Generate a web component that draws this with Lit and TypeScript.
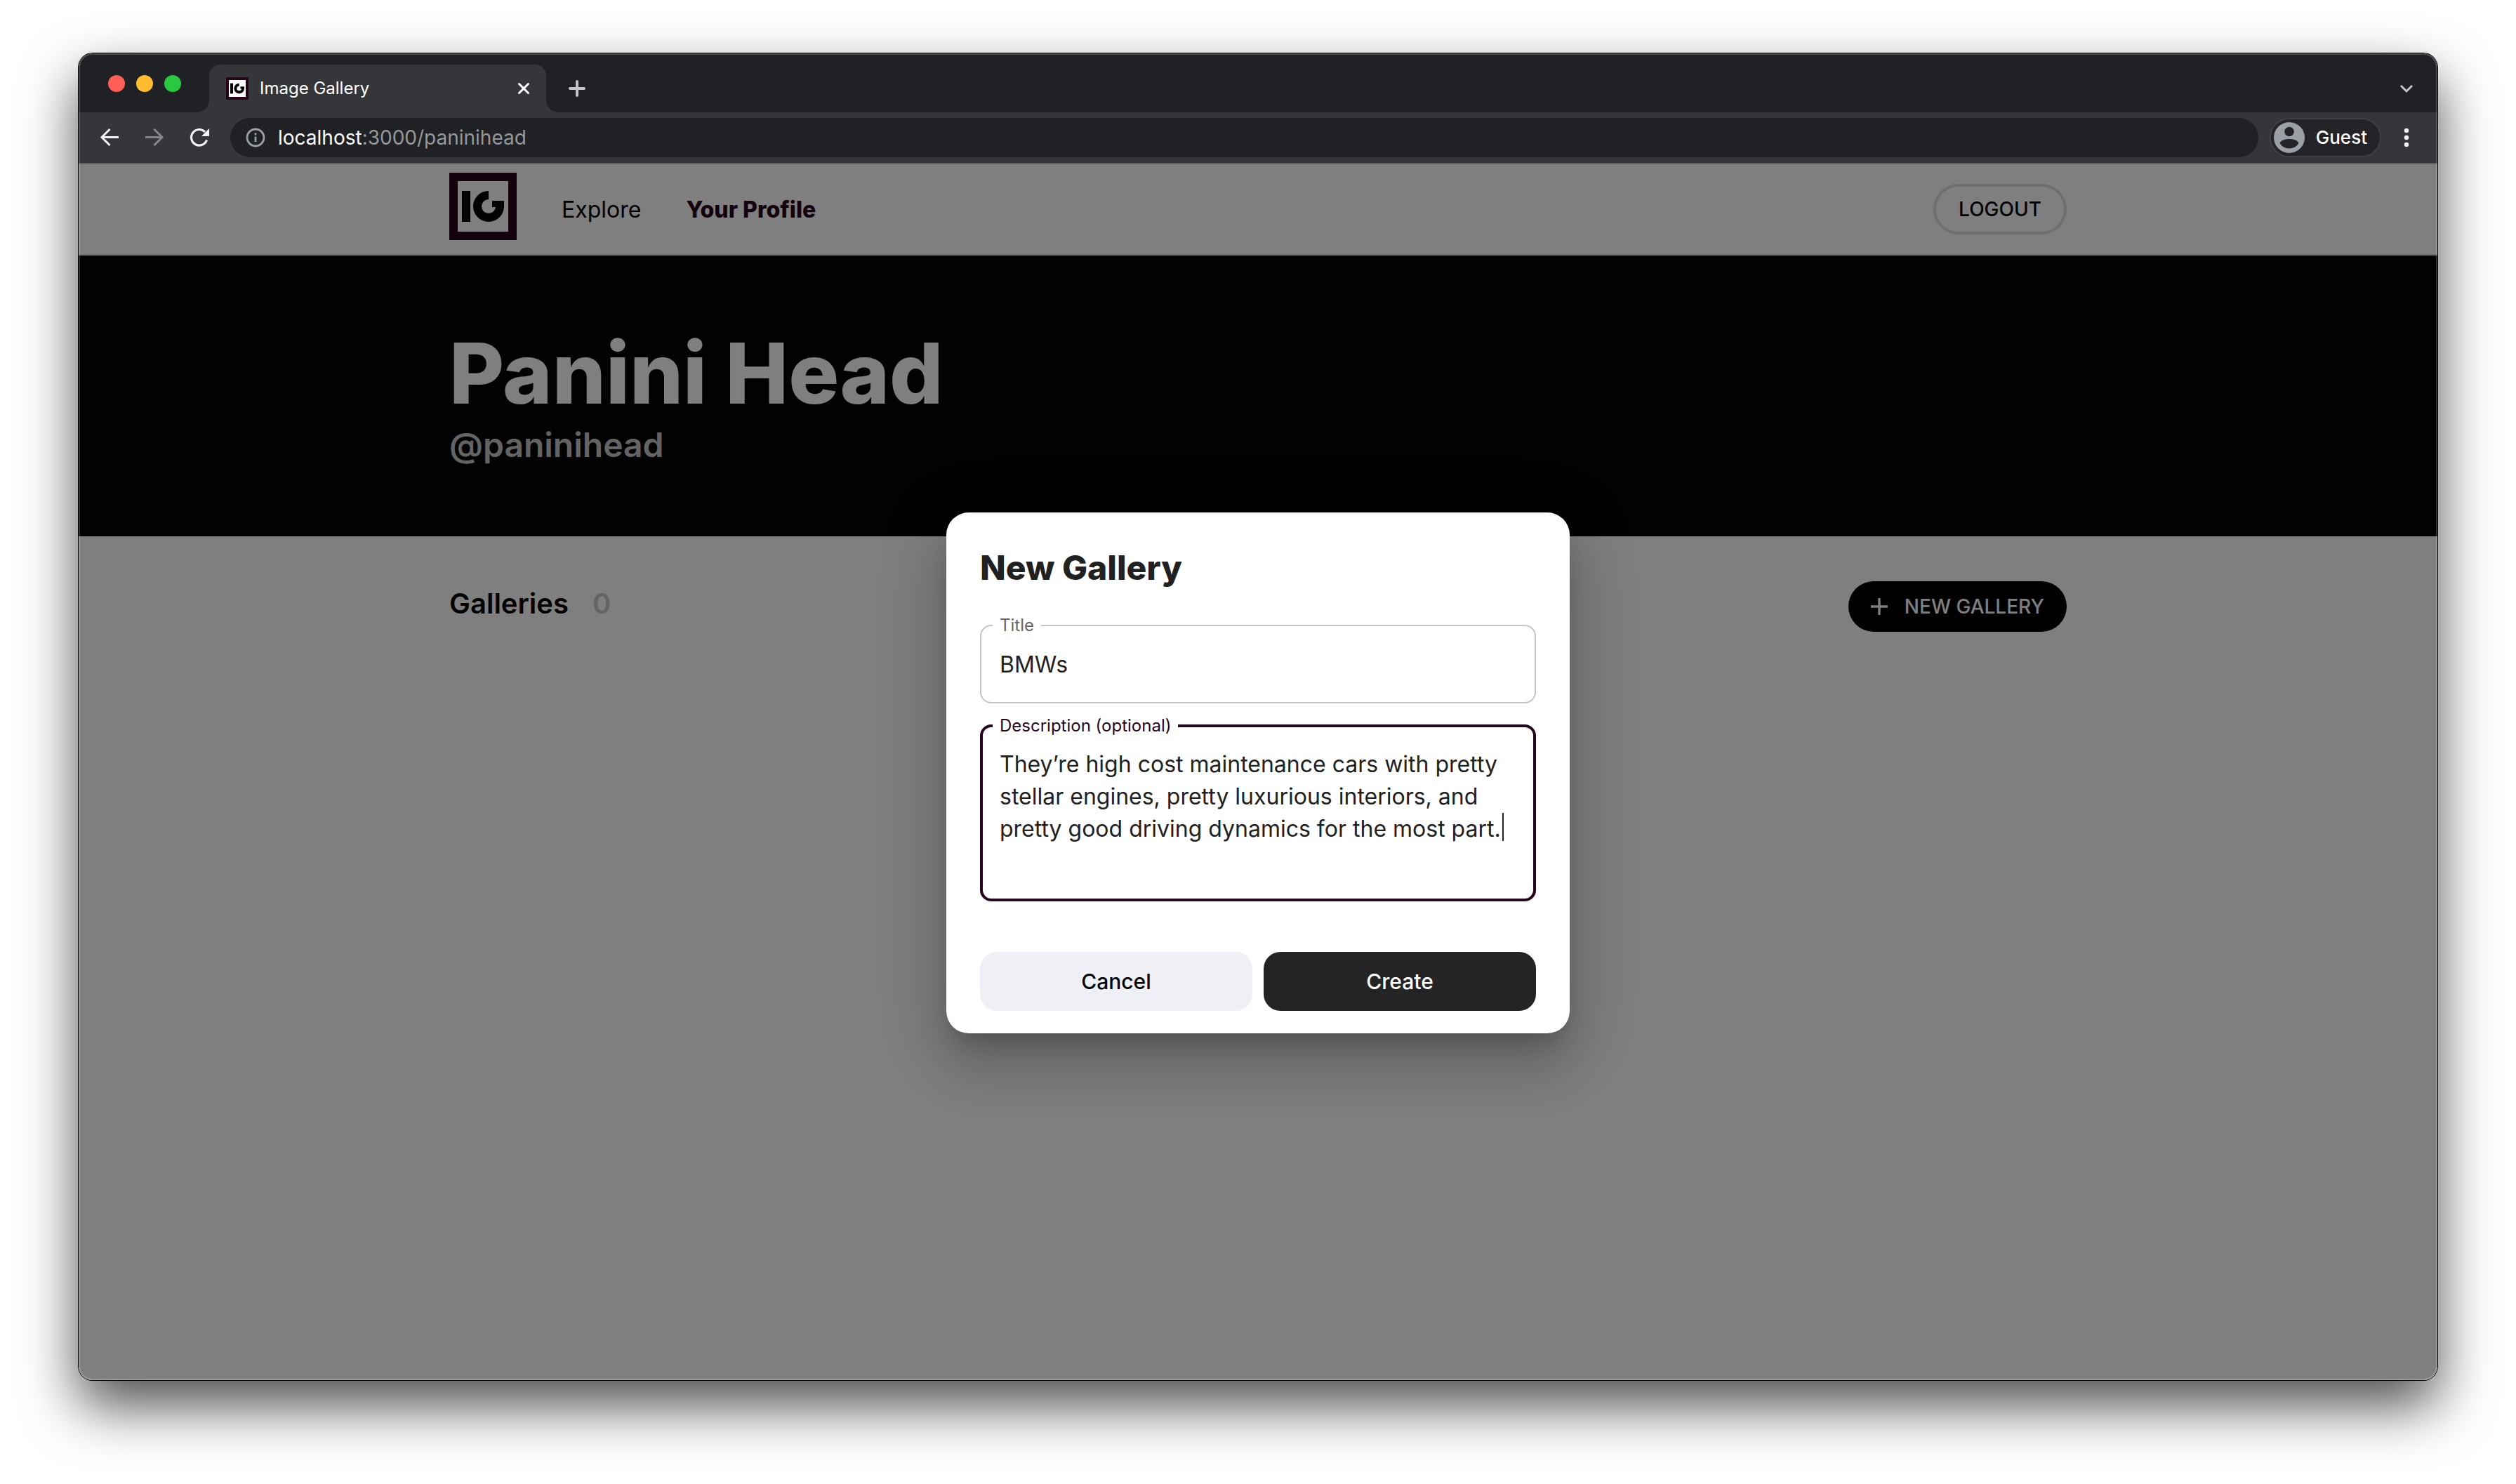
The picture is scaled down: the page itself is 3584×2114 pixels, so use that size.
import { LitElement, html, css, svg } from "lit";
import { customElement, property, state } from "lit/decorators.js";

const SANS = css`Inter, "Liberation Sans", sans-serif`;

/** Square "IG" brand mark, used for the favicon and the site header. */
@customElement("brand-mark")
export class BrandMark extends LitElement {
  static styles = css`
    :host {
      display: block;
    }
    .mark {
      display: block;
      width: 100%;
      height: 100%;
    }
  `;

  render() {
    return html`
      <svg class="mark" viewBox="0 0 96 96" role="img" aria-label="Image Gallery logo">
        <rect width="96" height="96" fill="#270519" />
        <rect x="12" y="12" width="72" height="72" fill="#fff" />
        <rect x="18" y="26" width="12" height="44" fill="#000" />
        <path d="M56 32a16 16 0 1 0 16 16" fill="none" stroke="#000" stroke-width="12" />
        <rect x="61" y="40" width="17" height="9" fill="#000" />
      </svg>
    `;
  }
}

/** Browser tab strip and toolbar. */
@customElement("browser-chrome")
export class BrowserChrome extends LitElement {
  @property() tabTitle = "";
  @property() host = "";
  @property() path = "";

  static styles = css`
    :host {
      display: block;
      font-family: ${SANS};
      color: #fff;
    }
    button {
      display: flex;
      align-items: center;
      justify-content: center;
      margin: 0;
      padding: 0;
      border: 0;
      background: none;
      color: inherit;
      font: inherit;
    }
    svg {
      display: block;
      fill: none;
      stroke: currentColor;
    }
    .strip {
      display: flex;
      align-items: flex-end;
      height: 84px;
      padding: 0 28px 0 42px;
      background: #202124;
    }
    .lights {
      display: flex;
      gap: 16px;
      padding-bottom: 29px;
    }
    .light {
      width: 24px;
      height: 24px;
      border-radius: 50%;
    }
    .close {
      background: #ff5f57;
    }
    .minimise {
      background: #febc2e;
    }
    .zoom {
      background: #28c840;
    }
    .tab {
      position: relative;
      display: flex;
      align-items: center;
      box-sizing: border-box;
      width: 480px;
      height: 68px;
      margin-left: 40px;
      padding: 0 16px 0 24px;
      border-radius: 16px 16px 0 0;
      background: #35363a;
    }
    .tab::before,
    .tab::after {
      content: "";
      position: absolute;
      bottom: 0;
      width: 16px;
      height: 16px;
    }
    .tab::before {
      right: 100%;
      background: radial-gradient(circle at 0 0, transparent 15px, #35363a 16px);
    }
    .tab::after {
      left: 100%;
      background: radial-gradient(circle at 100% 0, transparent 15px, #35363a 16px);
    }
    .favicon {
      width: 32px;
      height: 32px;
    }
    .tab-title {
      flex: 1;
      padding-left: 16px;
      font-size: 24px;
      line-height: 32px;
    }
    .icon-button {
      width: 32px;
      height: 68px;
    }
    .new-tab {
      margin-left: 28px;
      color: #c3c5c9;
    }
    .tab-search {
      margin-left: auto;
      color: #c3c5c9;
    }
    .toolbar {
      display: flex;
      align-items: center;
      height: 72px;
      padding: 0 28px;
      border-bottom: 2px solid #616265;
      background: #35363a;
    }
    .history {
      display: flex;
      gap: 32px;
      color: #f1f3f4;
    }
    .history .icon-button,
    .menu {
      height: 32px;
    }
    .history .icon-button:disabled {
      color: #86878a;
    }
    .omnibox {
      flex: 1;
      display: flex;
      align-items: center;
      gap: 18px;
      height: 56px;
      margin: 0 16px 0 28px;
      padding-left: 22px;
      border-radius: 28px;
      background: #202124;
      font-size: 28px;
      line-height: 36px;
    }
    .info {
      color: #9aa0a6;
    }
    .rest {
      color: #97989b;
    }
    .profile {
      gap: 16px;
      box-sizing: border-box;
      height: 56px;
      margin-right: 20px;
      padding: 0 18px 0 4px;
      border: 2px solid #3f4044;
      border-radius: 28px;
      background: #242428;
      font-size: 26px;
      font-weight: 500;
      line-height: 32px;
    }
  `;

  render() {
    return html`
      <div class="strip">
        <div class="lights">
          <span class="light close"></span>
          <span class="light minimise"></span>
          <span class="light zoom"></span>
        </div>
        <div class="tab">
          <brand-mark class="favicon"></brand-mark>
          <span class="tab-title">${this.tabTitle}</span>
          <button class="icon-button" aria-label="Close tab">
            <svg width="32" height="32" viewBox="0 0 32 32" stroke-width="3" stroke-linecap="round">
              <path d="M9.500 9.500 22.500 22.500M22.500 9.500 9.500 22.500" />
            </svg>
          </button>
        </div>
        <button class="icon-button new-tab" aria-label="New tab">
          <svg width="32" height="32" viewBox="0 0 32 32" stroke-width="4" stroke-linecap="round">
            <path d="M16 6V26M6 16H26" />
          </svg>
        </button>
        <button class="icon-button tab-search" aria-label="Search tabs">
          <svg width="32" height="32" viewBox="0 0 32 32" stroke-width="3">
            <path d="M8 12l8 8 8-8" />
          </svg>
        </button>
      </div>
      <div class="toolbar">
        <div class="history">
          <button class="icon-button" aria-label="Back">
            <svg width="32" height="32" viewBox="0 0 32 32" stroke-width="3">
              <path d="M29 15.500H5M16.500 4 5 15.500 16.500 27" />
            </svg>
          </button>
          <button class="icon-button" aria-label="Forward" disabled>
            <svg width="32" height="32" viewBox="0 0 32 32" stroke-width="3">
              <path d="M3 15.500H27M15.500 4 27 15.500 15.500 27" />
            </svg>
          </button>
          <button class="icon-button" aria-label="Reload">
            <svg width="32" height="32" viewBox="0 0 32 32" stroke-width="3.200">
              <path d="M26.500 19.500A11.300 11.300 0 1 1 24 8" />
              <path d="M30 3V14H19z" fill="currentColor" stroke="none" />
            </svg>
          </button>
        </div>
        <div class="omnibox">
          <svg class="info" width="28" height="28" viewBox="0 0 28 28" stroke-width="2.800">
            <circle cx="14" cy="14" r="12" />
            <path d="M14 12.500V20M14 7.500V10.500" />
          </svg>
          <span>${this.host}<span class="rest">${this.path}</span></span>
        </div>
        <button class="profile">
          <svg width="44" height="44" viewBox="0 0 44 44" stroke="none">
            <circle cx="22" cy="22" r="22" fill="#9aa0a6" stroke="none" />
            <circle cx="22" cy="13.500" r="6.800" fill="#242428" stroke="none" />
            <path
              d="M8.500 29.500C13 22.300 31 22.300 35.500 29.500C31 40 13 40 8.500 29.500z"
              fill="#242428"
              stroke="none"
            />
          </svg>
          Guest
        </button>
        <button class="icon-button menu" aria-label="Menu">
          <svg width="32" height="32" viewBox="0 0 32 32">
            ${[6, 16, 26].map(
              (y) => svg`<circle cx="16" cy=${y} r="3.200" fill="#f1f3f4" stroke="none" />`
            )}
          </svg>
        </button>
      </div>
    `;
  }
}

/** Dialog with the form that creates a gallery. */
@customElement("new-gallery-dialog")
export class NewGalleryDialog extends LitElement {
  @state() private name = "BMWs";
  @state() private description =
    "They’re high cost maintenance cars with pretty stellar engines, pretty luxurious interiors, and pretty good driving dynamics for the most part.";

  static styles = css`
    :host {
      display: block;
      font-family: ${SANS};
    }
    .dialog {
      box-sizing: border-box;
      width: 888px;
      max-width: 100%;
      padding: 48px 48px 32px;
      border-radius: 32px;
      background: #fff;
      color: #212121;
      box-shadow:
        0 22px 30px -14px rgba(0, 0, 0, 0.2),
        0 48px 76px 6px rgba(0, 0, 0, 0.14),
        0 18px 92px 16px rgba(0, 0, 0, 0.12);
    }
    .title {
      margin: 0 0 39px;
      font-size: 48px;
      font-weight: 800;
      line-height: 62px;
    }
    .form {
      display: flex;
      flex-direction: column;
      gap: 20px;
    }
    .field {
      position: relative;
      margin: 0;
      padding: 0 16px;
      border: 2px solid #c4c4c4;
      border-radius: 16px;
    }
    .field.active {
      padding: 0 14px;
      border: 4px solid #27051c;
    }
    .legend {
      padding: 0 10px;
      color: #666;
      font-size: 24px;
      line-height: 24px;
    }
    .active .legend {
      color: #27051c;
    }
    .control {
      display: block;
      box-sizing: border-box;
      width: 100%;
      margin: 0;
      padding: 20px 10px 30px;
      border: 0;
      outline: 0;
      background: none;
      color: inherit;
      font: 400 32px/46px ${SANS};
      resize: none;
      overflow: hidden;
    }
    input.control {
      height: 97px;
    }
    .caret {
      position: absolute;
      right: 42px;
      top: 112px;
      width: 2px;
      height: 40px;
      background: #212121;
    }
    .actions {
      display: grid;
      grid-template-columns: 1fr 1fr;
      gap: 16px;
      margin-top: 52px;
    }
    .action {
      height: 84px;
      border: 0;
      border-radius: 24px;
      background: #eff0f6;
      color: #000;
      font: 500 30px/40px ${SANS};
    }
    .action.primary {
      background: #242424;
      color: #fff;
    }
  `;

  render() {
    return html`
      <div class="dialog" role="dialog" aria-labelledby="dialog-title">
        <h2 class="title" id="dialog-title">New Gallery</h2>
        <form class="form" @submit=${(e: Event) => e.preventDefault()}>
          <fieldset class="field">
            <legend class="legend"><label for="name">Title</label></legend>
            <input
              class="control"
              id="name"
              type="text"
              .value=${this.name}
              @input=${(e: Event) => (this.name = (e.target as HTMLInputElement).value)}
            />
          </fieldset>
          <fieldset class="field active">
            <legend class="legend"><label for="description">Description (optional)</label></legend>
            <textarea
              class="control"
              id="description"
              rows="4"
              .value=${this.description}
              @input=${(e: Event) => (this.description = (e.target as HTMLTextAreaElement).value)}
            ></textarea>
            <span class="caret"></span>
          </fieldset>
          <div class="actions">
            <button class="action" type="button">Cancel</button>
            <button class="action primary" type="submit">Create</button>
          </div>
        </form>
      </div>
    `;
  }
}

@customElement("app-root")
export class AppRoot extends LitElement {
  static styles = css`
    :host {
      display: flex;
      box-sizing: border-box;
      min-height: 100vh;
      padding: 76px 112px 148px;
      background: #fff;
      color: #000;
      font-family: ${SANS};
    }
    .window {
      position: relative;
      flex: 1;
      display: flex;
      flex-direction: column;
      overflow: hidden;
      border-radius: 20px;
    }
    .window::after {
      content: "";
      position: absolute;
      inset: 0;
      border-radius: 20px;
      box-shadow: inset 0 0 0 2px rgba(255, 255, 255, 0.2);
      pointer-events: none;
    }
    .frame {
      flex: 1;
      display: flex;
      border-radius: 20px;
      box-shadow:
        0 0 0 1px #000,
        0 36px 80px rgba(0, 0, 0, 0.7);
    }
    .page {
      position: relative;
      flex: 1;
      background: #fff;
    }
    .container {
      display: flex;
      box-sizing: border-box;
      width: 100%;
      max-width: 2304px;
      margin: 0 auto;
    }
    .header {
      border-bottom: 2px solid #dfdfdf;
    }
    .nav {
      align-items: center;
      height: 128px;
    }
    .logo {
      align-self: flex-start;
      width: 96px;
      height: 96px;
      margin-top: 12px;
    }
    .links {
      display: flex;
      gap: 64px;
      padding: 2px 0 0 64px;
      font-size: 32px;
      line-height: 40px;
    }
    .link {
      color: #000;
      text-decoration: none;
    }
    .link.current {
      color: #27051c;
      font-weight: 800;
    }
    .pill {
      display: flex;
      align-items: center;
      gap: 24px;
      box-sizing: border-box;
      height: 72px;
      margin: 0 0 0 auto;
      border: 0;
      border-radius: 36px;
      font: 500 28px/36px ${SANS};
    }
    .logout {
      padding: 0 32px;
      border: 4px solid #dfdfdf;
      background: none;
      color: #000;
    }
    .create {
      padding: 0 32px;
      background: #000;
      color: #fff;
    }
    .plus {
      display: block;
    }
    .hero {
      padding: 98px 0;
      background: #050505;
    }
    .profile {
      flex-direction: column;
    }
    .name {
      margin: 0;
      color: #fff;
      font-size: 120px;
      font-weight: 800;
      line-height: 140px;
    }
    .handle {
      margin: 0;
      color: #c8c8c8;
      font-size: 48px;
      font-weight: 600;
      line-height: 64px;
    }
    .galleries {
      align-items: flex-start;
      padding-top: 64px;
    }
    .heading {
      margin: 0;
      padding-top: 8px;
      font-size: 40px;
      font-weight: 600;
      line-height: 48px;
    }
    .count {
      margin-left: 34px;
      color: #c8c8c8;
    }
    .backdrop {
      position: absolute;
      inset: 0;
      display: grid;
      place-items: center;
      padding-top: 2px;
      background: rgba(0, 0, 0, 0.5);
    }
  `;

  render() {
    return html`
      <div class="frame">
        <div class="window">
          <browser-chrome tabTitle="Image Gallery" host="localhost" path=":3000/paninihead"></browser-chrome>
          <div class="page">
            <header class="header">
              <nav class="container nav">
                <brand-mark class="logo"></brand-mark>
                <div class="links">
                  <a class="link" href="#explore">Explore</a>
                  <a class="link current" href="#profile" aria-current="page">Your Profile</a>
                </div>
                <button class="pill logout">LOGOUT</button>
              </nav>
            </header>
            <section class="hero">
              <div class="container profile">
                <h1 class="name">Panini Head</h1>
                <p class="handle">@paninihead</p>
              </div>
            </section>
            <main class="container galleries">
              <h2 class="heading">Galleries<span class="count">0</span></h2>
              <button class="pill create">
                <svg class="plus" width="24" height="24" viewBox="0 0 24 24" stroke="#fff" stroke-width="3.400">
                  <path d="M12 0V24M0 12H24" />
                </svg>
                NEW GALLERY
              </button>
            </main>
            <div class="backdrop">
              <new-gallery-dialog></new-gallery-dialog>
            </div>
          </div>
        </div>
      </div>
    `;
  }
}
